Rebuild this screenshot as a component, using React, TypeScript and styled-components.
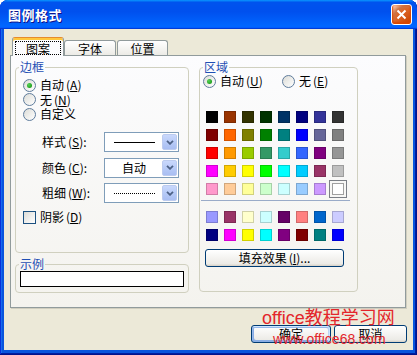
import styled, { createGlobalStyle } from "styled-components"

const GlobalStyle = createGlobalStyle`
  html, body {
    margin: 0;
    padding: 0;
    background: #ffffff;
  }
  body {
    font-family: "Noto Sans CJK SC", "Liberation Sans", sans-serif;
    font-size: 12px;
    color: #000000;
  }
`

// standard Excel palette shown in the "区域" group
const palette = [
  "#000000", "#993300", "#333300", "#003300", "#003366", "#000080", "#333399", "#333333",
  "#800000", "#FF6600", "#808000", "#008000", "#008080", "#0000FF", "#666699", "#808080",
  "#FF0000", "#FF9900", "#99CC00", "#339966", "#33CCCC", "#3366FF", "#800080", "#969696",
  "#FF00FF", "#FFCC00", "#FFFF00", "#00FF00", "#00FFFF", "#00CCFF", "#993366", "#C0C0C0",
  "#FF99CC", "#FFCC99", "#FFFF99", "#CCFFCC", "#CCFFFF", "#99CCFF", "#CC99FF", "#FFFFFF"
]

const chartColors = [
  "#9999FF", "#993366", "#FFFFCC", "#CCFFFF", "#660066", "#FF8080", "#0066CC", "#CCCCFF",
  "#000080", "#FF00FF", "#FFFF00", "#00FFFF", "#800080", "#800000", "#008080", "#0000FF"
]

const Window = styled.div`
  position: relative;
  width: 417px;
  height: 355px;
  display: flex;
  flex-direction: column;
  background: #0855dd;
  border-radius: 8px 8px 0 0;
  overflow: hidden;
  box-shadow: inset -1px -1px #00138c, inset 1px 1px #0831d9,
    inset -2px -2px #001ea0, inset 2px 2px #166aee;
`

const TitleBar = styled.div`
  height: 29px;
  flex: none;
  display: flex;
  align-items: center;
  justify-content: space-between;
  padding: 0 5px 0 8px;
  box-sizing: border-box;
  background: linear-gradient(
    180deg,
    #0997ff,
    #0053ee 8%,
    #0050ee 40%,
    #0066ff 88%,
    #0066ff 93%,
    #005bff 95%,
    #003dd7 96%,
    #003dd7
  );
`

const Title = styled.span`
  color: #ffffff;
  font-weight: bold;
  font-size: 13px;
  line-height: 16px;
  letter-spacing: 0.5px;
  text-shadow: 1px 1px #0f1089;
`

const CloseButton = styled.div`
  width: 21px;
  height: 21px;
  box-sizing: border-box;
  border: 1px solid #ffffff;
  border-radius: 3px;
  display: flex;
  align-items: center;
  justify-content: center;
  background: radial-gradient(
    circle at 90% 90%,
    #cc4600 0%,
    #dc6527 55%,
    #cd7546 70%,
    #ffccb2 90%,
    #ffffff 100%
  );
  box-shadow: inset 0 -1px 2px 1px #da4600;
`

const Body = styled.div`
  flex: 1;
  margin: 0 4px 5px;
  padding: 8px 7px 0 6px;
  background: #ece9d8;
  display: flex;
  flex-direction: column;
`

const TabStrip = styled.div`
  display: flex;
  align-items: flex-end;
  height: 18px;
  position: relative;
  z-index: 1;
`

const Tab = styled.div<{ $active?: boolean; $w: number; $ml: number }>`
  width: ${(p) => p.$w}px;
  margin-left: ${(p) => p.$ml}px;
  height: ${(p) => (p.$active ? 19 : 15)}px;
  margin-bottom: ${(p) => (p.$active ? -1 : 0)}px;
  box-sizing: border-box;
  border: 1px solid #919b9c;
  border-bottom: none;
  border-radius: 3px 3px 0 0;
  display: flex;
  align-items: flex-end;
  justify-content: center;
  padding: 0 2px ${(p) => (p.$active ? 1 : 0)}px;
  background: ${(p) =>
    p.$active ? "#fcfcfe" : "linear-gradient(180deg, #ffffff, #ecebe6)"};
  ${(p) =>
    p.$active &&
    `border-top: 1px solid #e68b2c; box-shadow: inset 0 2px 0 #ffc73c;`}
`

const TabLabel = styled.span<{ $focus?: boolean }>`
  flex: 1;
  height: 14px;
  line-height: 13px;
  text-align: center;
  box-sizing: border-box;
  border: 1px dotted ${(p) => (p.$focus ? "#000000" : "transparent")};
`

const Panel = styled.div`
  height: 253px;
  box-sizing: border-box;
  border: 1px solid #919b9c;
  background: linear-gradient(180deg, #fcfcfe, #f4f3ee);
  box-shadow: 1px 1px 0 #d0cebf;
  padding: 4px 0 0 4px;
  display: grid;
  grid-template-columns: 174px 159px;
  column-gap: 10px;
  align-items: start;
`

const Column = styled.div`
  display: flex;
  flex-direction: column;
  gap: 4px;
`

const Group = styled.fieldset<{ $h: number }>`
  margin: 0;
  padding: 0;
  min-width: 0;
  height: ${(p) => p.$h}px;
  box-sizing: border-box;
  border: 1px solid #d0d0bf;
  border-radius: 4px;
`

const Legend = styled.legend`
  margin-left: 3px;
  padding: 0 1px;
  color: #1f4fb4;
  font-size: 12px;
  line-height: 14px;
`

const GroupBody = styled.div<{ $pad: number }>`
  padding-left: ${(p) => p.$pad}px;
  display: flex;
  flex-direction: column;
  align-items: flex-start;
`

const OptionList = styled.div`
  margin-top: 4px;
  display: flex;
  flex-direction: column;
`

const OptionRow = styled.div<{ $indent?: number }>`
  display: flex;
  gap: 0;
  margin-left: ${(p) => p.$indent ?? 0}px;
`

const Option = styled.label<{ $w?: number }>`
  height: 14.5px;
  display: flex;
  align-items: center;
  gap: 4px;
  line-height: 14px;
  width: ${(p) => (p.$w ? `${p.$w}px` : "auto")};
  white-space: nowrap;
`

const Radio = styled.span<{ $checked?: boolean }>`
  width: 13px;
  height: 13px;
  flex: none;
  box-sizing: border-box;
  border-radius: 50%;
  border: 1px solid #5f7c9c;
  background: linear-gradient(135deg, #dcdcd7, #ffffff);
  display: flex;
  align-items: center;
  justify-content: center;
  &::after {
    content: "";
    width: 5px;
    height: 5px;
    border-radius: 50%;
    background: ${(p) =>
      p.$checked
        ? "radial-gradient(circle at 35% 35%, #55d255, #21a121 70%)"
        : "transparent"};
  }
`

const Check = styled.span`
  width: 13px;
  height: 13px;
  flex: none;
  box-sizing: border-box;
  border: 1px solid #1c5180;
  background: linear-gradient(135deg, #dcdcd7, #ffffff);
`

const Key = styled.span`
  margin-left: 2px;
  & u {
    text-decoration-thickness: 1px;
    text-underline-offset: 1px;
  }
`

const ComboGrid = styled.div`
  margin-top: 10.5px;
  margin-left: 19px;
  display: grid;
  grid-template-columns: 62px 75px;
  row-gap: 5.5px;
  align-items: center;
`

const FieldLabel = styled.span`
  line-height: 14px;
  white-space: nowrap;
`

const Combo = styled.div`
  width: 75px;
  height: 20px;
  box-sizing: border-box;
  border: 1px solid #7f9db9;
  background: #ffffff;
  padding: 1px;
  display: flex;
  align-items: stretch;
`

const ComboValue = styled.div`
  flex: 1;
  display: flex;
  align-items: center;
  justify-content: center;
  line-height: 14px;
`

const LinePreview = styled.span<{ $style: "solid" | "dotted" }>`
  width: 41px;
  border-top: 1px ${(p) => p.$style} #000000;
`

const DropButton = styled.div`
  width: 15px;
  box-sizing: border-box;
  border: 1px solid #bccbef;
  border-radius: 2px;
  background: linear-gradient(180deg, #c9d8fc, #b4c8f6 60%, #a9bef2);
  display: flex;
  align-items: center;
  justify-content: center;
`

const CheckRow = styled.label`
  margin-top: 7px;
  display: flex;
  align-items: center;
  gap: 4px;
  line-height: 14px;
`

const Preview = styled.div`
  width: 164px;
  height: 16px;
  box-sizing: border-box;
  border: 1px solid #000000;
  background: #ffffff;
`

const Swatches = styled.div<{ $mt: number }>`
  margin-top: ${(p) => p.$mt}px;
  display: grid;
  grid-template-columns: repeat(8, 12px);
  gap: 6px;
`

const Swatch = styled.span<{ $c: string; $selected?: boolean }>`
  width: 12px;
  height: 12px;
  box-sizing: border-box;
  background: ${(p) => p.$c};
  border: 1px solid rgba(0, 0, 0, 0.18);
  ${(p) =>
    p.$selected &&
    `border-color: #a0a0a0; outline: 1px solid #7b7f86; outline-offset: 2px;`}
`

const Divider = styled.div`
  margin: 5px 0 0 -5px;
  width: 149px;
  height: 1px;
  background: #9aabc8;
`

const PushButton = styled.div<{ $w: number; $default?: boolean }>`
  width: ${(p) => p.$w}px;
  height: 18px;
  box-sizing: border-box;
  border: 1px solid #003c74;
  border-radius: 3px;
  background: linear-gradient(180deg, #ffffff, #ecebe6 86%, #d6d0c5);
  display: flex;
  align-items: center;
  justify-content: center;
  line-height: 14px;
  ${(p) =>
    p.$default &&
    `box-shadow: inset -1px 1px #cee7ff, inset 1px 2px #98b8ea,
      inset -2px 2px #bcd4f6, inset 1px -1px #89ade4, inset 2px -2px #89ade4;`}
`

const FillButton = styled(PushButton)`
  margin: 8px 0 0 -1px;
`

const Footer = styled.div`
  margin-top: 17px;
  margin-right: -1px;
  display: flex;
  justify-content: flex-end;
  gap: 3px;
`

const Watermark = styled.div`
  position: absolute;
  left: 262px;
  top: 307px;
  color: #e3262b;
  font-family: "Liberation Sans", "Noto Sans CJK SC", sans-serif;
  pointer-events: none;
  display: flex;
  flex-direction: column;
`

const WatermarkTitle = styled.span`
  font-size: 18px;
  line-height: 22px;
`

const WatermarkUrl = styled.span`
  font-size: 14px;
  line-height: 16px;
  margin-left: 11px;
  margin-top: 2px;
`

const Chevron = () => (
  <svg width="8" height="5" viewBox="0 0 8 5">
    <path d="M1 0.8l3 3 3-3" fill="none" stroke="#4d6185" strokeWidth="1.8" />
  </svg>
)

const CloseGlyph = () => (
  <svg width="11" height="11" viewBox="0 0 11 11">
    <path d="M1.5 1.5l8 8M9.5 1.5l-8 8" stroke="#ffffff" strokeWidth="2" />
  </svg>
)

export default function App() {
  return (
    <>
      <GlobalStyle />
      <Window>
        <TitleBar>
          <Title>图例格式</Title>
          <CloseButton>
            <CloseGlyph />
          </CloseButton>
        </TitleBar>
        <Body>
          <TabStrip>
            <Tab $active $w={52} $ml={2}>
              <TabLabel $focus>图案</TabLabel>
            </Tab>
            <Tab $w={52} $ml={0}>
              <TabLabel>字体</TabLabel>
            </Tab>
            <Tab $w={51} $ml={1}>
              <TabLabel>位置</TabLabel>
            </Tab>
          </TabStrip>
          <Panel>
            <Column>
              <Group $h={193}>
                <Legend>边框</Legend>
                <GroupBody $pad={7}>
                  <OptionList>
                    <Option>
                      <Radio $checked />
                      <span>
                        自动<Key>(<u>A</u>)</Key>
                      </span>
                    </Option>
                    <Option>
                      <Radio />
                      <span>
                        无<Key>(<u>N</u>)</Key>
                      </span>
                    </Option>
                    <Option>
                      <Radio />
                      <span>自定义</span>
                    </Option>
                  </OptionList>
                  <ComboGrid>
                    <FieldLabel>
                      样式<Key>(<u>S</u>):</Key>
                    </FieldLabel>
                    <Combo>
                      <ComboValue>
                        <LinePreview $style="solid" />
                      </ComboValue>
                      <DropButton>
                        <Chevron />
                      </DropButton>
                    </Combo>
                    <FieldLabel>
                      颜色<Key>(<u>C</u>):</Key>
                    </FieldLabel>
                    <Combo>
                      <ComboValue>自动</ComboValue>
                      <DropButton>
                        <Chevron />
                      </DropButton>
                    </Combo>
                    <FieldLabel>
                      粗细<Key>(<u>W</u>):</Key>
                    </FieldLabel>
                    <Combo>
                      <ComboValue>
                        <LinePreview $style="dotted" />
                      </ComboValue>
                      <DropButton>
                        <Chevron />
                      </DropButton>
                    </Combo>
                  </ComboGrid>
                  <CheckRow>
                    <Check />
                    <span>
                      阴影<Key>(<u>D</u>)</Key>
                    </span>
                  </CheckRow>
                </GroupBody>
              </Group>
              <Group $h={36}>
                <Legend>示例</Legend>
                <GroupBody $pad={4}>
                  <Preview />
                </GroupBody>
              </Group>
            </Column>
            <Group $h={232}>
              <Legend>区域</Legend>
              <GroupBody $pad={6}>
                <OptionRow $indent={-3}>
                  <Option $w={79}>
                    <Radio $checked />
                    <span>
                      自动<Key>(<u>U</u>)</Key>
                    </span>
                  </Option>
                  <Option>
                    <Radio />
                    <span>
                      无<Key>(<u>E</u>)</Key>
                    </span>
                  </Option>
                </OptionRow>
                <Swatches $mt={22}>
                  {palette.map((c, i) => (
                    <Swatch key={i} $c={c} $selected={i === palette.length - 1} />
                  ))}
                </Swatches>
                <Divider />
                <Swatches $mt={10}>
                  {chartColors.map((c, i) => (
                    <Swatch key={i} $c={c} />
                  ))}
                </Swatches>
                <FillButton $w={139}>
                  填充效果<Key>(<u>I</u>)...</Key>
                </FillButton>
              </GroupBody>
            </Group>
          </Panel>
          <Footer>
            <PushButton $w={80} $default>
              确定
            </PushButton>
            <PushButton $w={73}>取消</PushButton>
          </Footer>
        </Body>
        <Watermark>
          <WatermarkTitle>office教程学习网</WatermarkTitle>
          <WatermarkUrl>www.office68.com</WatermarkUrl>
        </Watermark>
      </Window>
    </>
  )
}
